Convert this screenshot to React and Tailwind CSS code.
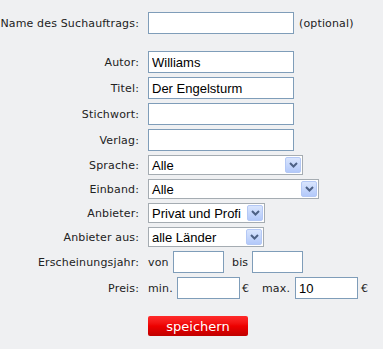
import React from "react";

const lbl = "text-right text-[11px] leading-none tracking-[0.15px] text-[#222] font-['DejaVu_Sans',sans-serif] whitespace-nowrap";
const inp = "h-[22px] border border-[#7f9db9] bg-white px-[3px] text-[13px] text-black font-['Liberation_Sans',Arial,sans-serif] outline-none";
const small = "text-[11px] leading-none tracking-[0.15px] text-[#222] font-['DejaVu_Sans',sans-serif]";

function Arrow() {
  return (
    <div className="flex h-[16px] w-[16px] items-center justify-center rounded-[2px] border border-[#b4c8f5] bg-gradient-to-b from-[#d9e5fd] to-[#b3c9fa]">
      <svg width="9" height="6" viewBox="0 0 9 6">
        <path d="M1 1 L4.5 4.5 L8 1" fill="none" stroke="#4d6185" strokeWidth="2" />
      </svg>
    </div>
  );
}

function Select({ w, value }) {
  return (
    <div
      className="flex h-[20px] items-center justify-between border border-[#a5acb2] bg-white pl-[3px] pr-[1px]"
      style={{ width: w }}
    >
      <span className="text-[13px] leading-none text-black font-['Liberation_Sans',Arial,sans-serif] whitespace-nowrap">{value}</span>
      <Arrow />
    </div>
  );
}

export default function App() {
  return (
    <div className="min-h-[349px] w-[383px] bg-[#eff0f2] pt-[12px]">
      <div className="grid grid-cols-[139px_1fr] items-center gap-x-[9px] gap-y-[4px]">
        <div className={lbl}>Name des Suchauftrags:</div>
        <div className="flex items-center gap-[5px]">
          <input className={inp + " w-[146px]"} defaultValue="" />
          <span className={small}>(optional)</span>
        </div>

        <div className="col-span-2 h-[9px]" />

        <div className={lbl}>Autor:</div>
        <input className={inp + " w-[146px]"} defaultValue="Williams" />
        <div className={lbl}>Titel:</div>
        <input className={inp + " w-[146px]"} defaultValue="Der Engelsturm" />
        <div className={lbl}>Stichwort:</div>
        <input className={inp + " w-[146px]"} defaultValue="" />
        <div className={lbl}>Verlag:</div>
        <input className={inp + " w-[146px]"} defaultValue="" />

        <div className={lbl}>Sprache:</div>
        <Select w={155} value="Alle" />
        <div className={lbl}>Einband:</div>
        <Select w={171} value="Alle" />
        <div className={lbl}>Anbieter:</div>
        <Select w={117} value="Privat und Profi" />
        <div className={lbl}>Anbieter aus:</div>
        <Select w={116} value="alle Länder" />

        <div className={lbl}>Erscheinungsjahr:</div>
        <div className="flex items-center">
          <span className={small + " w-[25px]"}>von</span>
          <input className={inp + " w-[51px]"} defaultValue="" />
          <span className={small + " ml-[8px] w-[20px]"}>bis</span>
          <input className={inp + " w-[51px]"} defaultValue="" />
        </div>

        <div className={lbl}>Preis:</div>
        <div className="flex items-center">
          <span className={small + " w-[29px]"}>min.</span>
          <input className={inp + " w-[63px]"} defaultValue="" />
          <span className={small + " ml-[2px] w-[20px]"}>€</span>
          <span className={small + " w-[33px]"}>max.</span>
          <input className={inp + " w-[63px]"} defaultValue="10" />
          <span className={small + " ml-[3px]"}>€</span>
        </div>

        <div className="col-span-2 h-[9px]" />

        <div />
        <button className="flex h-[20px] w-[100px] items-center justify-center rounded-[2px] bg-gradient-to-b from-[#ff2a2a] via-[#ee0000] to-[#c00000] text-[13px] leading-none text-white font-['DejaVu_Sans',sans-serif]">
          speichern
        </button>
      </div>
    </div>
  );
}
